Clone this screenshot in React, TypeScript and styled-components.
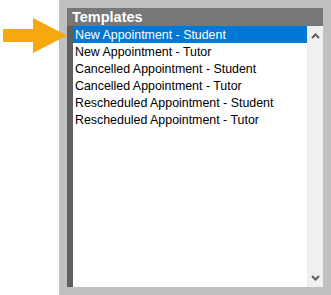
import React from "react";
import styled, { createGlobalStyle } from "styled-components";

const Global = createGlobalStyle`
  html, body { margin: 0; padding: 0; background: #ffffff; }
  body { font-family: "Liberation Sans", Arial, sans-serif; }
`;

const Page = styled.div`
  position: relative;
  width: 331px;
  height: 295px;
  display: flex;
`;

const Gutter = styled.div`
  width: 59px;
  flex: none;
`;

const Panel = styled.div`
  flex: 1;
  background: #c0c0c0;
  padding: 8px;
  display: flex;
  flex-direction: column;
`;

const Header = styled.div`
  height: 18px;
  background: #777777;
  color: #ffffff;
  font-weight: bold;
  font-size: 14.5px;
  line-height: 18px;
  padding-left: 5px;
`;

const Body = styled.div`
  flex: 1;
  display: flex;
`;

const Strip = styled.div`
  width: 6px;
  background: #5f5f5f;
`;

const List = styled.ul`
  flex: 1;
  margin: 0;
  padding: 0;
  list-style: none;
  background: #ffffff;
`;

const Row = styled.li<{ $selected?: boolean }>`
  height: 17px;
  line-height: 18px;
  font-size: 12.4px;
  padding-left: 2px;
  color: ${(p) => (p.$selected ? "#ffffff" : "#000000")};
  background: ${(p) => (p.$selected ? "#0078d7" : "transparent")};
  white-space: nowrap;
`;

const Scrollbar = styled.div`
  width: 16px;
  background: #f0f0f0;
  display: flex;
  flex-direction: column;
  justify-content: space-between;
  align-items: center;
  padding: 7px 0 6px;
  box-sizing: border-box;
`;

const Arrow = styled.svg`
  position: absolute;
  left: 3px;
  top: 18px;
`;

const Chevron = ({ down }: { down?: boolean }) => (
  <svg width="9" height="6" viewBox="0 0 9 6">
    <path
      d={down ? "M1 1 L4.5 4.5 L8 1" : "M1 5 L4.5 1.5 L8 5"}
      fill="none"
      stroke="#606060"
      strokeWidth="2"
    />
  </svg>
);

const items = [
  "New Appointment - Student",
  "New Appointment - Tutor",
  "Cancelled Appointment - Student",
  "Cancelled Appointment - Tutor",
  "Rescheduled Appointment - Student",
  "Rescheduled Appointment - Tutor",
];

export default function App() {
  return (
    <>
      <Global />
      <Page>
        <Gutter />
        <Panel>
          <Header>Templates</Header>
          <Body>
            <Strip />
            <List>
              {items.map((t, i) => (
                <Row key={t} $selected={i === 0}>
                  {t}
                </Row>
              ))}
            </List>
            <Scrollbar>
              <Chevron />
              <Chevron down />
            </Scrollbar>
          </Body>
        </Panel>
        <Arrow width="64" height="35" viewBox="0 0 64 35">
          <polygon points="0,11 30,11 30,0 64,17.5 30,35 30,24 0,24" fill="#f5a90f" />
        </Arrow>
      </Page>
    </>
  );
}
